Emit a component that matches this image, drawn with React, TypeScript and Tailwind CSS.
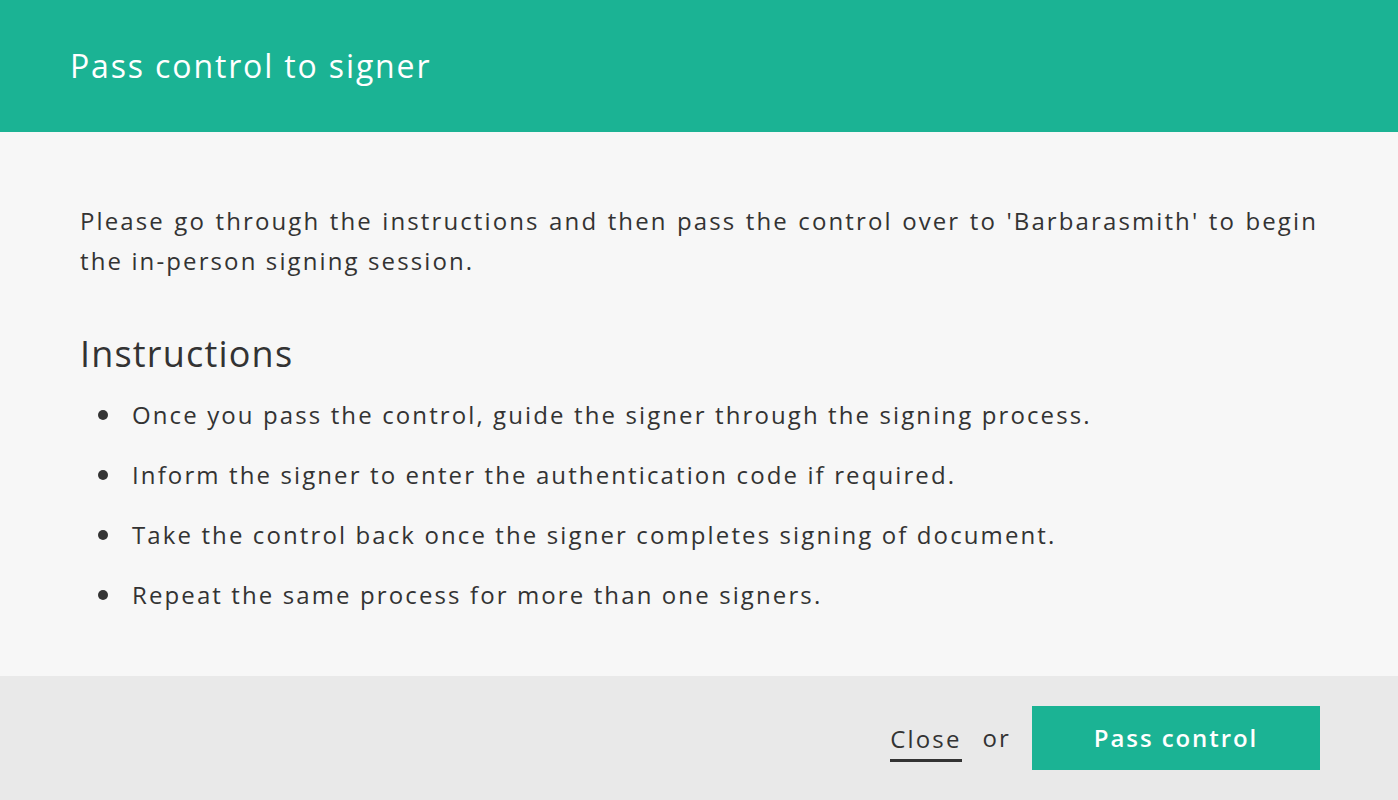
export default function App() {
  const steps = [
    "Once you pass the control, guide the signer through the signing process.",
    "Inform the signer to enter the authentication code if required.",
    "Take the control back once the signer completes signing of document.",
    "Repeat the same process for more than one signers.",
  ];

  return (
    <div className="flex h-[800px] w-[1398px] flex-col bg-[#f7f7f7] font-['Open_Sans',sans-serif] text-[#333]">
      {/* Header */}
      <header className="flex h-[132px] shrink-0 items-center bg-[#1bb394] px-[70px]">
        <h1 className="text-[32px] tracking-[0.058em] text-white">Pass control to signer</h1>
      </header>

      {/* Content */}
      <main className="flex-1 px-[80px] pt-[69px]">
        <p className="text-justify text-[24px] leading-[40px] tracking-[0.088em]">
          Please go through the instructions and then pass the control over to 'Barbarasmith' to begin the
          in-person signing session.
        </p>
        <h2 className="mt-[49px] text-[36px] leading-[48px] tracking-[0.033em]">Instructions</h2>
        <ul className="mt-[17px] flex flex-col gap-[20px] pl-[18px]">
          {steps.map((s) => (
            <li key={s} className="flex items-center gap-[24px] text-[24px] leading-[40px] tracking-[0.088em]">
              <span className="h-[10px] w-[10px] shrink-0 rounded-full bg-[#333]" />
              {s}
            </li>
          ))}
        </ul>
      </main>

      {/* Footer */}
      <footer className="flex h-[124px] shrink-0 items-center justify-end gap-[21px] bg-[#e9e9e9] pr-[78px]">
        <a className="mt-[10px] border-b-[3px] border-[#333] pb-[5px] text-[24px] leading-[30px] tracking-[0.09em]">Close</a>
        <span className="text-[24px] tracking-[0.088em]">or</span>
        <button className="h-[64px] w-[288px] bg-[#1bb394] text-[24px] font-semibold tracking-[0.08em] text-white">
          Pass control
        </button>
      </footer>
    </div>
  );
}
